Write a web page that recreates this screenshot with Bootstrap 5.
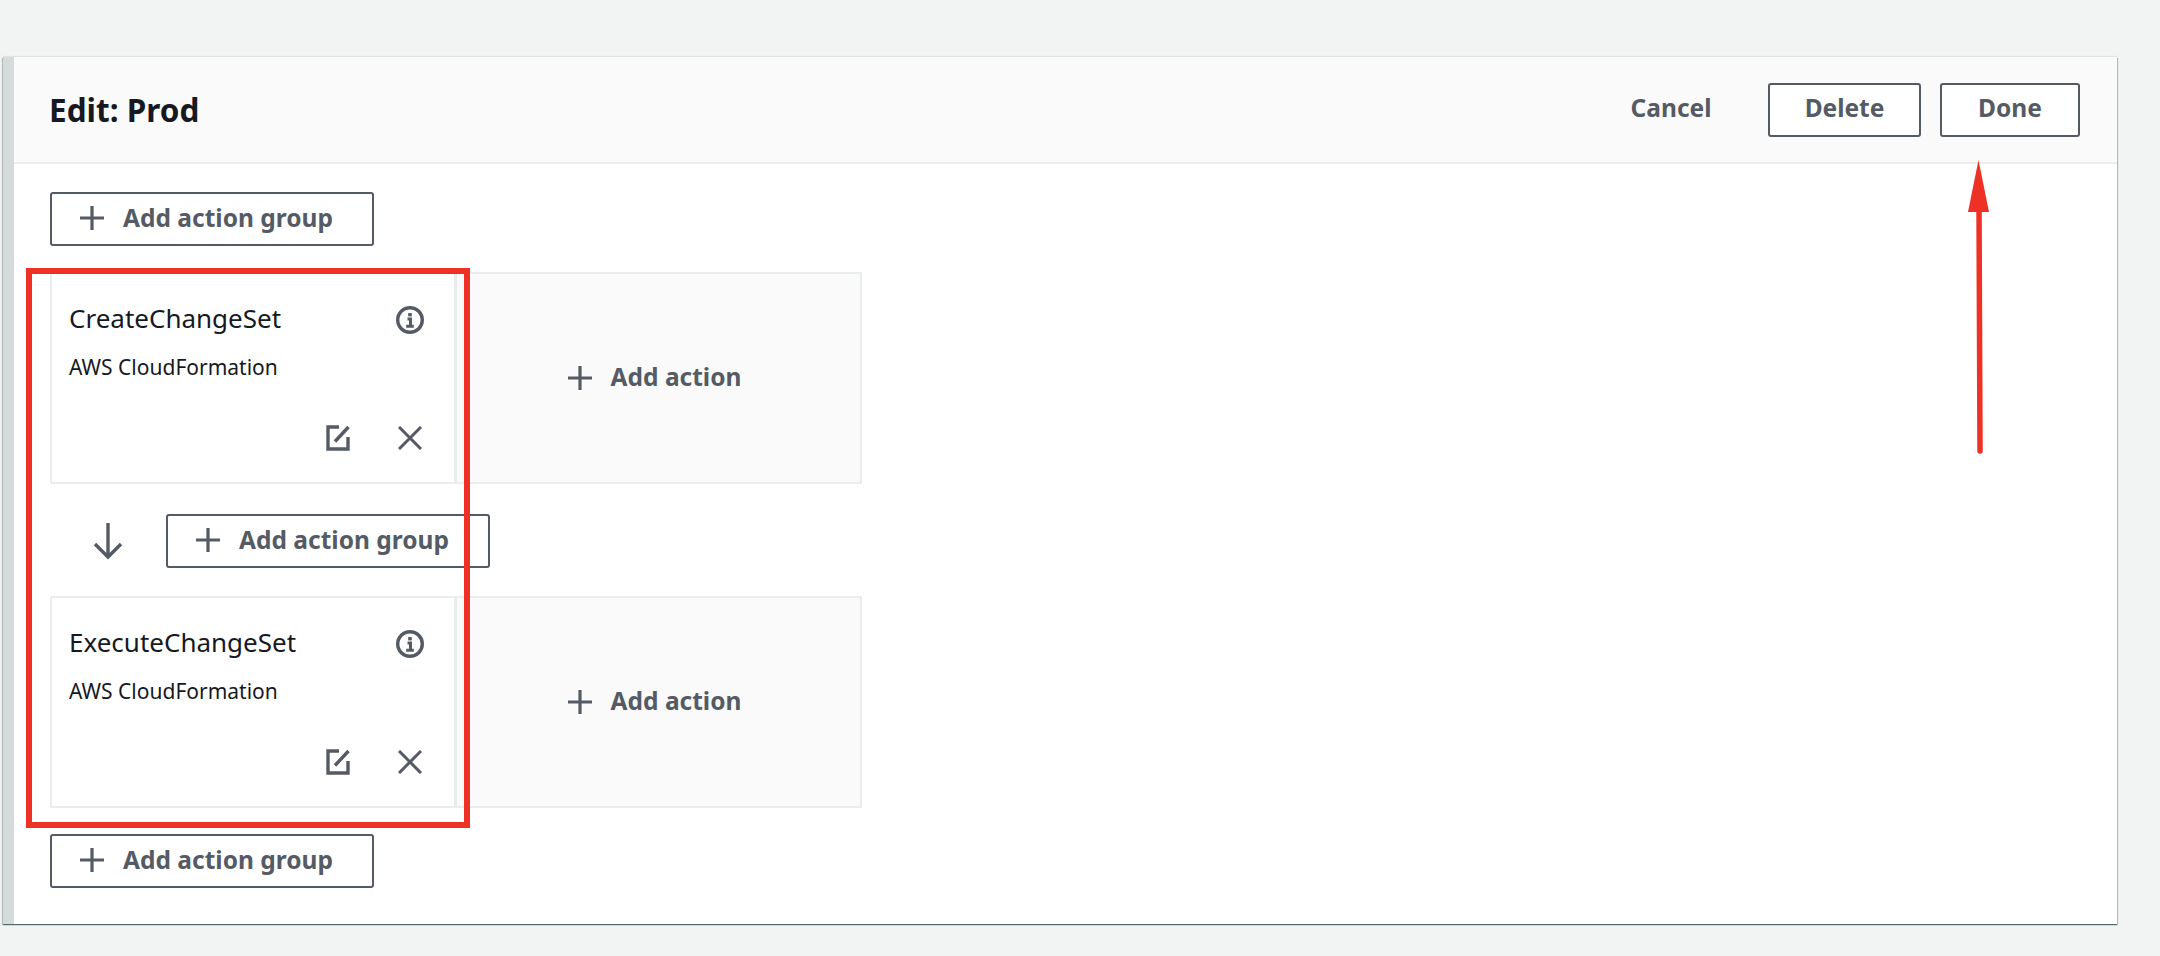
<!DOCTYPE html>
<html lang="en">
<head>
<meta charset="utf-8">
<title>Edit: Prod</title>
<link href="https://cdn.jsdelivr.net/npm/bootstrap@5.3.0/dist/css/bootstrap.min.css" rel="stylesheet">
<style>
html,body{height:956px;overflow:hidden}
body{background:#f2f3f3;font-family:"Noto Sans","Open Sans",sans-serif;color:#16191f;position:relative}
.stage-panel{margin:57px 0 0 3px;width:2114px;height:867px;background:#fff;border-left:11px solid #d5dbdb;box-shadow:0 1px 1px 0 rgba(0,28,36,.45),1px 1px 1px 0 rgba(0,28,36,.2),-1px 1px 1px 0 rgba(0,28,36,.2),0 -1px 1px 0 rgba(0,28,36,.08)}
.stage-head{height:107px;background:#fafafa;border-bottom:2px solid #eaeded;padding:0 37px 0 35px}
.stage-title{font-size:31.5px;font-weight:700;margin:0;line-height:1}
.aws-btn{--bs-btn-color:#545b64;--bs-btn-border-color:#545b64;--bs-btn-hover-color:#545b64;--bs-btn-hover-border-color:#545b64;--bs-btn-hover-bg:#fafafa;--bs-btn-border-radius:3px;--bs-btn-border-width:2px;--bs-btn-padding-y:0;--bs-btn-padding-x:0;--bs-btn-font-size:24.5px;--bs-btn-font-weight:700;--bs-btn-bg:#fff;height:54px;display:inline-flex;align-items:center;justify-content:center;gap:18px;line-height:1;padding-bottom:2px}
.btn-wide{width:324px;padding-right:12px}
.btn-delete{width:153px;margin-right:19px}
.btn-done{width:140px}
.btn-cancel{--bs-btn-border-color:transparent;--bs-btn-bg:transparent;--bs-btn-hover-border-color:transparent;--bs-btn-hover-bg:transparent;width:80px;margin-right:57px}
.stage-body{padding:28px 0 0 36px}
.act-row{height:212px;margin-top:26px;width:812px}
.act-card{width:406px;border:2px solid #eaeded;padding:0 20px 0 17px}
.act-name{font-size:26px;line-height:32px;padding-top:28px;height:60px}
.act-sub{font-size:21px;line-height:28px;margin-top:19px}
.act-tools{height:44px;margin-top:35px;gap:48px;padding-right:12px}
.act-add{width:407px;margin-left:-1px;background:#fafafa;border:2px solid #eaeded;color:#545b64;font-size:24.5px;font-weight:700;gap:18px;padding-right:9px;padding-bottom:1px}
.info-ico{margin:3px 9px 0 0}
.flow-gap{height:112px;margin:0;padding-top:2px}
.flow-arrow{width:116px}
.last-add{margin-top:26px}
.ico{display:block;flex:none;fill:none;stroke:#545b64}
.note-layer{position:absolute;left:0;top:0;pointer-events:none}
</style>
</head>
<body>
<div class="stage-panel">
  <div class="stage-head d-flex align-items-center">
    <h1 class="stage-title me-auto">Edit: Prod</h1>
    <button class="btn aws-btn btn-cancel" type="button">Cancel</button>
    <button class="btn aws-btn btn-delete" type="button">Delete</button>
    <button class="btn aws-btn btn-done" type="button">Done</button>
  </div>
  <div class="stage-body">
    <button class="btn aws-btn btn-wide" type="button"><svg class="ico" width="26" height="26" viewBox="0 0 26 26" stroke-width="3.2"><path d="M13 1v24M1 13h24"/></svg>Add action group</button>

    <div class="act-row d-flex">
      <div class="act-card">
        <div class="act-name d-flex justify-content-between align-items-start">CreateChangeSet
          <svg class="ico info-ico" width="30" height="30" viewBox="0 0 30 30" stroke-width="3.4"><circle cx="15" cy="15" r="12.3"/><path d="M15 8v3.4" stroke-width="3.6"/><path d="M12.5 14h3v7M11.2 21.2h7.6" stroke-width="3"/></svg>
        </div>
        <div class="act-sub">AWS CloudFormation</div>
        <div class="act-tools d-flex justify-content-end align-items-center">
          <svg class="ico" width="24" height="26" viewBox="0 0 24 26" stroke-width="3.4"><path d="M13 2H2v22h20V12M22.5 2 9 16.5"/></svg>
          <svg class="ico" width="24" height="24" viewBox="0 0 24 24" stroke-width="3"><path d="M1 1l22 22M23 1 1 23"/></svg>
        </div>
      </div>
      <div class="act-add d-flex align-items-center justify-content-center"><svg class="ico" width="26" height="26" viewBox="0 0 26 26" stroke-width="3.2"><path d="M13 1v24M1 13h24"/></svg>Add action</div>
    </div>

    <div class="flow-gap d-flex align-items-center">
      <div class="flow-arrow d-flex justify-content-center"><svg class="ico" width="30" height="38" viewBox="0 0 30 38" stroke-width="3.4"><path d="M15 1v34M2 22l13 13 13-13"/></svg></div>
      <button class="btn aws-btn btn-wide" type="button"><svg class="ico" width="26" height="26" viewBox="0 0 26 26" stroke-width="3.2"><path d="M13 1v24M1 13h24"/></svg>Add action group</button>
    </div>

    <div class="act-row d-flex mt-0">
      <div class="act-card">
        <div class="act-name d-flex justify-content-between align-items-start">ExecuteChangeSet
          <svg class="ico info-ico" width="30" height="30" viewBox="0 0 30 30" stroke-width="3.4"><circle cx="15" cy="15" r="12.3"/><path d="M15 8v3.4" stroke-width="3.6"/><path d="M12.5 14h3v7M11.2 21.2h7.6" stroke-width="3"/></svg>
        </div>
        <div class="act-sub">AWS CloudFormation</div>
        <div class="act-tools d-flex justify-content-end align-items-center">
          <svg class="ico" width="24" height="26" viewBox="0 0 24 26" stroke-width="3.4"><path d="M13 2H2v22h20V12M22.5 2 9 16.5"/></svg>
          <svg class="ico" width="24" height="24" viewBox="0 0 24 24" stroke-width="3"><path d="M1 1l22 22M23 1 1 23"/></svg>
        </div>
      </div>
      <div class="act-add d-flex align-items-center justify-content-center"><svg class="ico" width="26" height="26" viewBox="0 0 26 26" stroke-width="3.2"><path d="M13 1v24M1 13h24"/></svg>Add action</div>
    </div>

    <div class="last-add"><button class="btn aws-btn btn-wide" type="button"><svg class="ico" width="26" height="26" viewBox="0 0 26 26" stroke-width="3.2"><path d="M13 1v24M1 13h24"/></svg>Add action group</button></div>
  </div>
</div>
<svg class="note-layer" width="2160" height="956" viewBox="0 0 2160 956">
  <rect x="29" y="271" width="438" height="554" fill="none" stroke="#ee3124" stroke-width="6"/>
  <path d="M1980 451 1979 205" fill="none" stroke="#ee3124" stroke-width="5.5" stroke-linecap="round"/>
  <path d="M1978.5 160 1968 212H1989Z" fill="#ee3124"/>
</svg>
<script src="https://cdn.jsdelivr.net/npm/bootstrap@5.3.0/dist/js/bootstrap.bundle.min.js"></script>
</body>
</html>
